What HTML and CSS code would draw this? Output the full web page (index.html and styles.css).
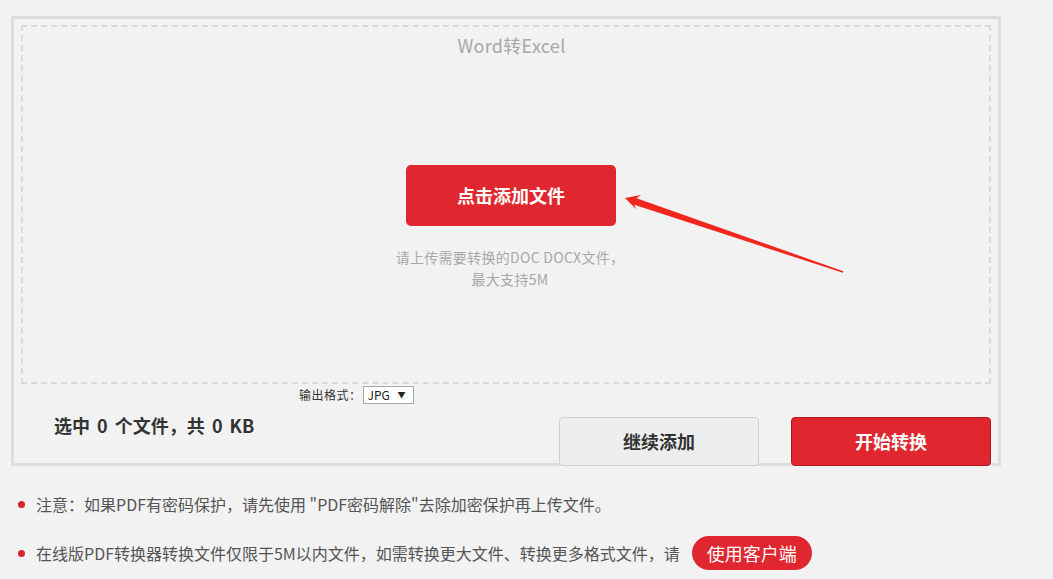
FILE: index.html
```html
<!DOCTYPE html>
<html lang="zh-CN">
<head>
<meta charset="utf-8">
<title>Word转Excel</title>
<link rel="stylesheet" href="styles.css">
</head>
<body>
<div class="panel">
  <div class="dropzone">
    <div class="title">Word转Excel</div>
    <div class="add-btn">点击添加文件</div>
    <p class="hint">请上传需要转换的DOC DOCX文件，<br>最大支持5M</p>
    <svg class="arrow" width="1053" height="400" viewBox="0 0 1053 400">
      <polygon fill="#f1271d" points="625,198 640.8,194.9 636.5,198.2 843.3,271.2 842.8,272.8 634.3,204.8 636,209.1"/>
    </svg>
  </div>
  <div class="options">
    <span class="opt-label">输出格式：</span>
    <span class="select"><span>JPG</span><span class="caret">▼</span></span>
  </div>
  <div class="footer">
    <div class="summary">选中 0 个文件，共 0 KB</div>
    <div class="actions">
      <div class="btn btn-grey">继续添加</div>
      <div class="btn btn-red">开始转换</div>
    </div>
  </div>
</div>
<ul class="notes">
  <li>注意：如果PDF有密码保护，请先使用 "PDF密码解除"去除加密保护再上传文件。</li>
  <li>在线版PDF转换器转换文件仅限于5M以内文件，如需转换更大文件、转换更多格式文件，请<span class="pill">使用客户端</span></li>
</ul>
</body>
</html>
```
FILE: styles.css
```css
html, body {
  margin: 0;
  padding: 0;
  background: #f2f2f2;
  font-family: "Noto Sans CJK SC", "Noto Sans", sans-serif;
  color: #333;
}

.panel {
  margin: 16px 0 0 11px;
  width: 990px;
  box-sizing: border-box;
  border: 3px solid #dddddd;
  padding: 6px 7px 0 7px;
}

.dropzone {
  position: relative;
  height: 359px;
  box-sizing: border-box;
  border: 2px dashed #d9d9d9;
  text-align: center;
  padding-top: 6px;
}

.title {
  font-size: 18px;
  line-height: 24px;
  color: #a8a8a8;
  margin-left: 11px;
  letter-spacing: 0.3px;
}

.add-btn {
  width: 210px;
  height: 61px;
  margin: 108px 0 0 383px;
  background: #e0262e;
  border-radius: 5px;
  color: #fff;
  font-size: 18px;
  font-weight: bold;
  line-height: 61px;
}

.hint {
  margin: 20px 0 0 8px;
  font-size: 14px;
  line-height: 22px;
  color: #a8a8a8;
  letter-spacing: 0.3px;
}

.arrow {
  position: absolute;
  left: -23px;
  top: -27px;
  pointer-events: none;
}

.options {
  margin-top: 2px;
  margin-left: 278px;
  display: flex;
  align-items: center;
  height: 18px;
  font-size: 12px;
}

.opt-label {
  color: #333;
  line-height: 18px;
  margin-right: 1px;
  letter-spacing: 0.5px;
}

.select {
  width: 51px;
  height: 18px;
  box-sizing: border-box;
  border: 1px solid #a9a9a9;
  background: #fff;
  display: flex;
  align-items: center;
  justify-content: space-between;
  padding: 0 7px 0 4px;
  font-size: 12px;
  line-height: 16px;
  color: #222;
}

.caret {
  font-size: 8px;
}

.footer {
  margin-top: 13px;
  margin-bottom: -3px;
  display: flex;
  align-items: flex-start;
  justify-content: space-between;
}

.summary {
  padding-left: 33px;
  font-size: 18px;
  font-weight: bold;
  line-height: 16px;
  color: #333;
  word-spacing: 3px;
}

.actions {
  display: flex;
  gap: 32px;
}

.btn {
  width: 200px;
  height: 49px;
  box-sizing: border-box;
  border-radius: 4px;
  font-size: 18px;
  font-weight: bold;
  line-height: 47px;
  text-align: center;
}

.btn-grey {
  background: #eeeeee;
  border: 1px solid #cfcfcf;
  color: #333;
}

.btn-red {
  background: #e0262e;
  border: 1px solid #b01820;
  color: #fff;
}

.notes {
  list-style: none;
  margin: 21px 0 0;
  padding: 0 0 0 18px;
}

.notes li {
  display: flex;
  align-items: center;
  gap: 11px;
  height: 34px;
  font-size: 16px;
  color: #555;
  margin-bottom: 15px;
  white-space: nowrap;
}

.notes li::before {
  content: "";
  width: 7px;
  height: 7px;
  border-radius: 50%;
  background: #d9262c;
  flex: none;
}

.pill {
  margin-left: 1px;
  height: 34px;
  padding: 0 15px;
  border-radius: 17px;
  background: #e0262e;
  color: #fff;
  font-size: 18px;
  line-height: 34px;
}
```
